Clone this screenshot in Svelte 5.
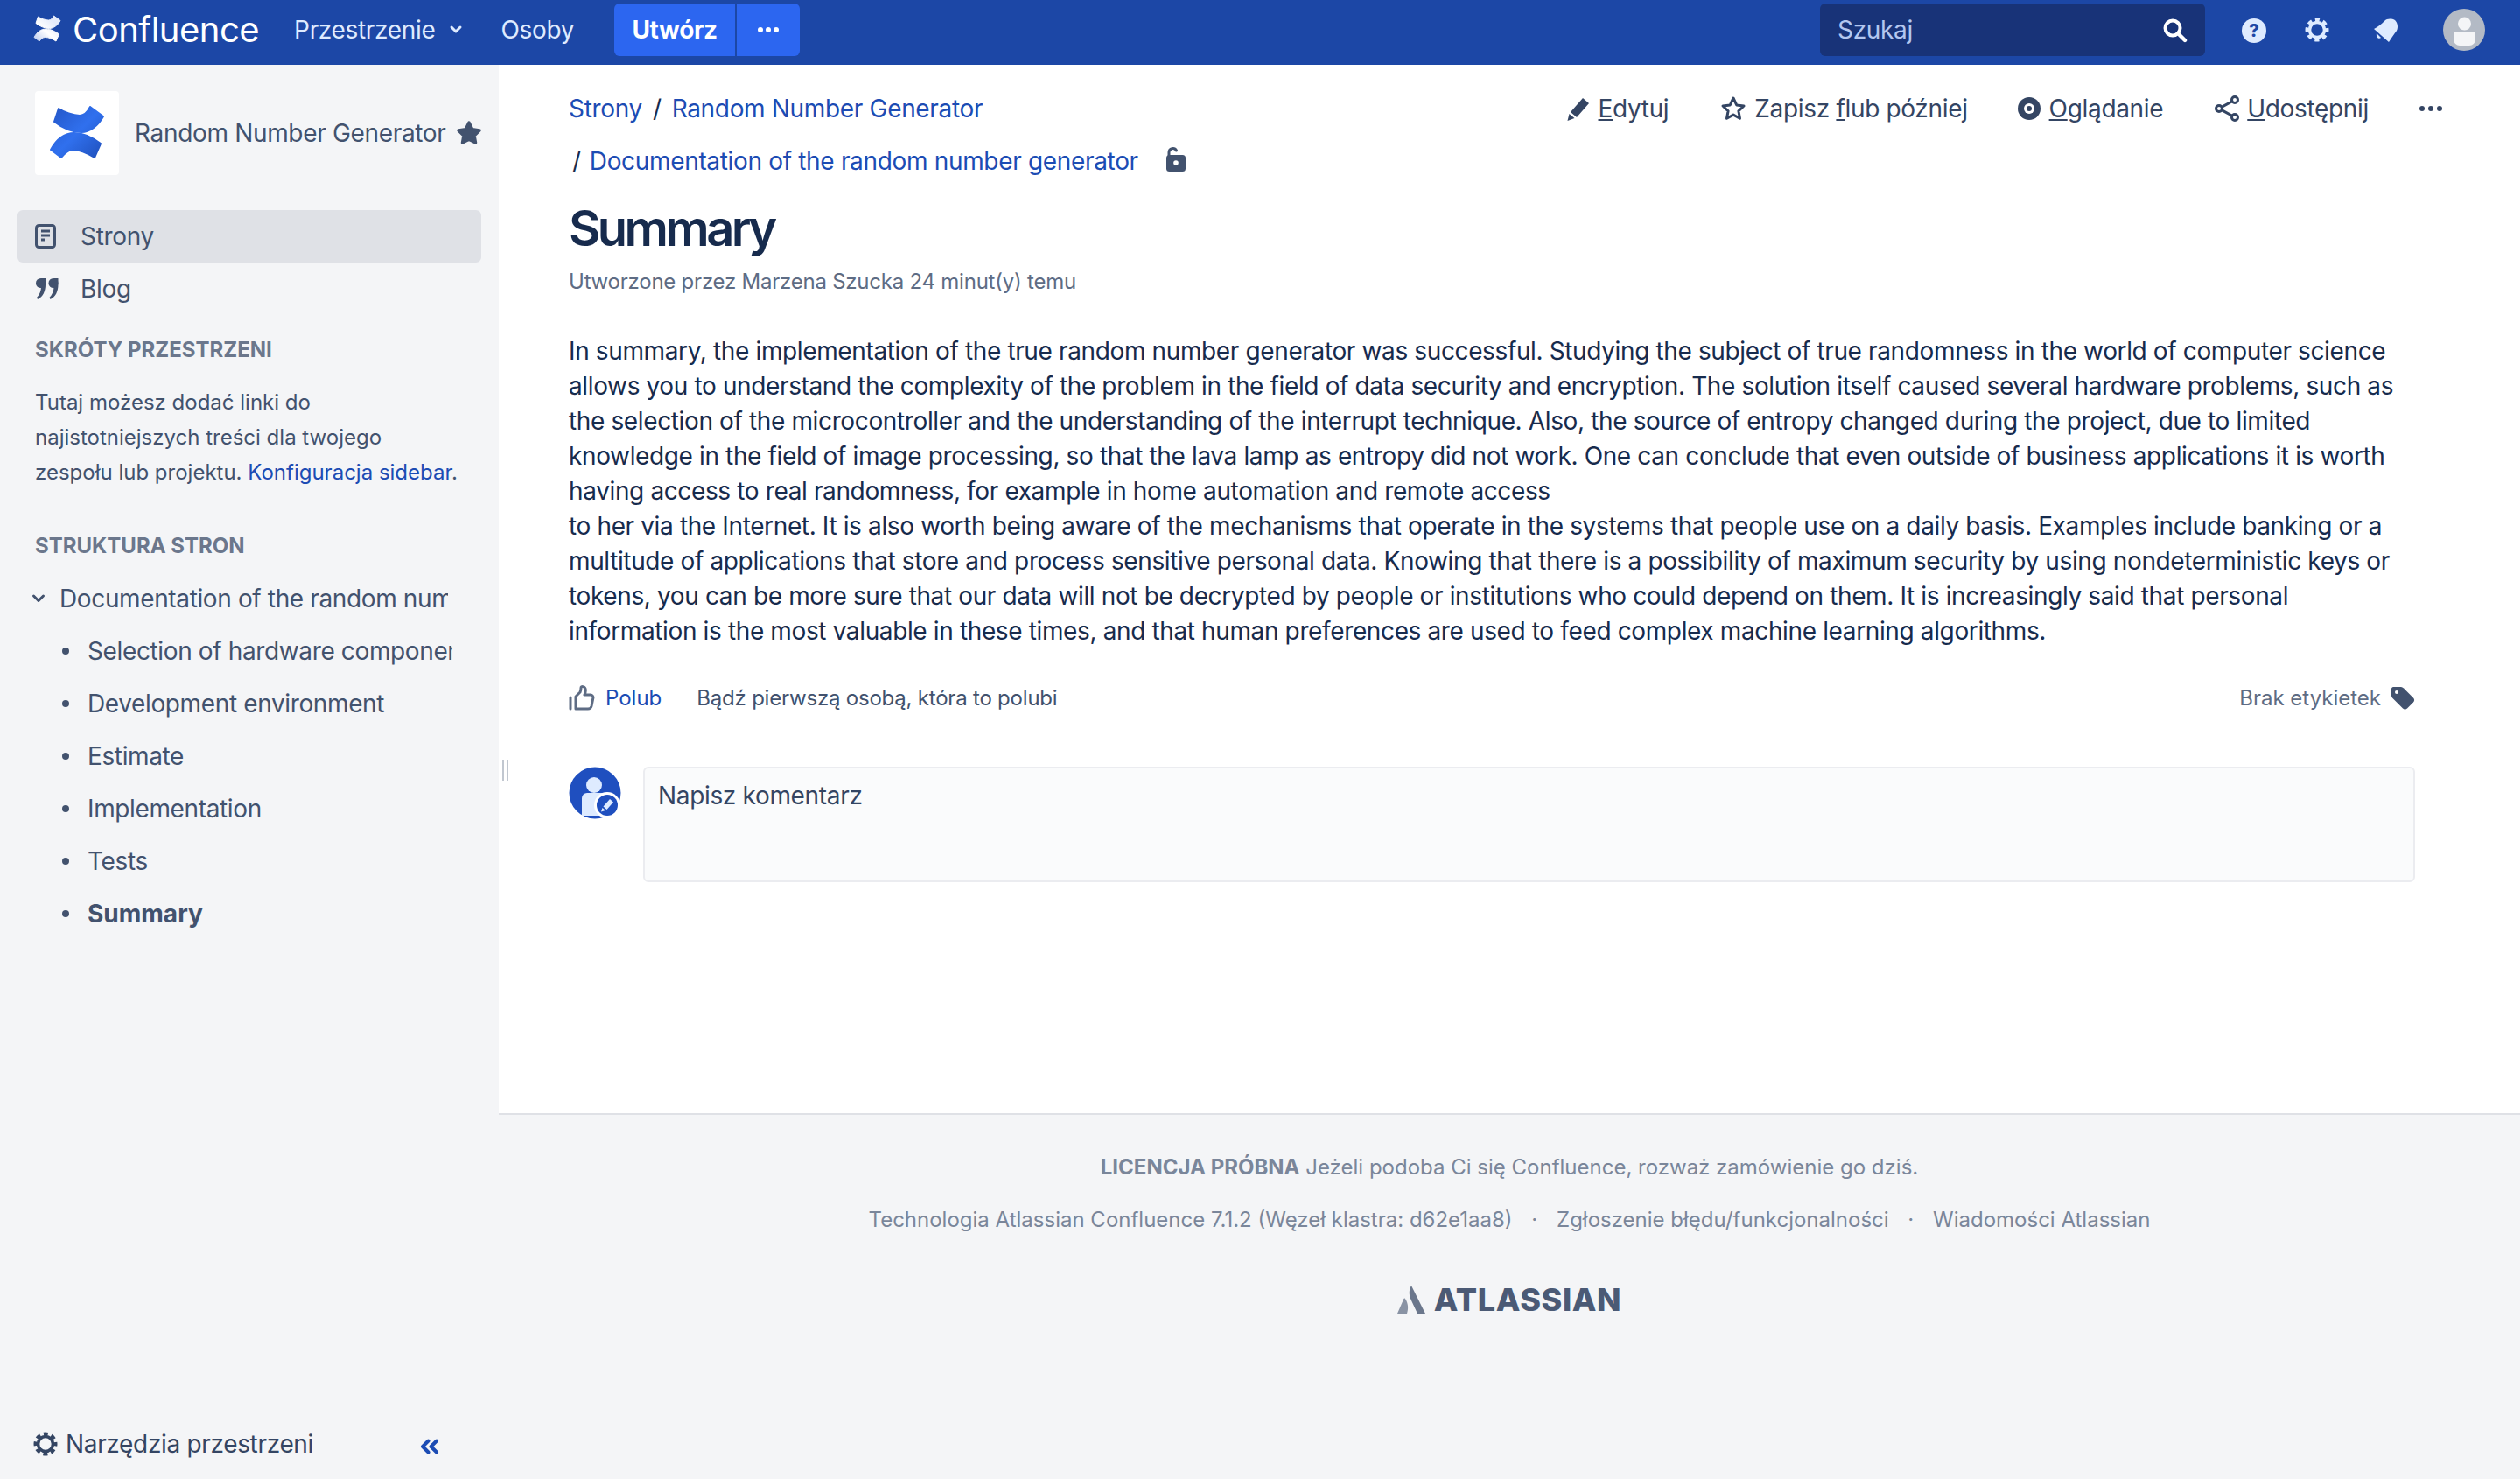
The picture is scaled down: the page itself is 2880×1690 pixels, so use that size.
<script>
  const tree = [
    { label: 'Selection of hardware components', current: false },
    { label: 'Development environment', current: false },
    { label: 'Estimate', current: false },
    { label: 'Implementation', current: false },
    { label: 'Tests', current: false },
    { label: 'Summary', current: true }
  ];
</script>

{#snippet logoShape()}
  <path d="M27 20C33 24 44 28 51 28C56 28 60 24 63 18L78 29C72 40 62 47 53 47C42 47 31 42 22 35Z" />
  <path d="M18 67C24 56 33 48 45 48C56 48 67 54 75 60L68 76C60 71 52 67 43 67C38 67 34 71 30 76Z" />
{/snippet}

{#snippet gear(size)}
  <svg width={size} height={size} viewBox="0 0 28 28" fill="none" stroke="currentColor">
    <circle cx="14" cy="14" r="8.500" stroke-width="3.600" />
    <circle cx="14" cy="14" r="11.500" stroke-width="4" stroke-dasharray="5 4.030" stroke-dashoffset="2.500" />
  </svg>
{/snippet}

<div class="page">
  <header class="topbar">
    <svg class="brand-mark" width="32" height="32" viewBox="16 16 64 64" fill="url(#brandFade)" stroke="url(#brandFade)" stroke-width="2" stroke-linejoin="round">
      <defs>
        <linearGradient id="brandFade" gradientUnits="userSpaceOnUse" x1="20" y1="78" x2="60" y2="30">
          <stop offset="0" stop-color="#b9c9ee" />
          <stop offset="0.55" stop-color="#fff" />
          <stop offset="1" stop-color="#e6ecfa" />
        </linearGradient>
      </defs>
      {@render logoShape()}
    </svg>
    <span class="brand-name">Confluence</span>
    <span class="top-link spaces">Przestrzenie</span>
    <svg class="top-chevron" width="16" height="12" viewBox="0 0 16 12" fill="none" stroke="#deebff" stroke-width="3" stroke-linecap="round" stroke-linejoin="round"><path d="M3 3l5 5 5-5" /></svg>
    <span class="top-link people">Osoby</span>
    <div class="create">
      <span class="create-main">Utwórz</span>
      <span class="create-more">
        <svg width="26" height="8" viewBox="0 0 26 8" fill="#fff"><circle cx="4" cy="4" r="3" /><circle cx="13" cy="4" r="3" /><circle cx="22" cy="4" r="3" /></svg>
      </span>
    </div>
    <div class="top-right">
      <div class="search">
        <span>Szukaj</span>
        <svg width="30" height="30" viewBox="0 0 30 30" fill="none" stroke="#fff" stroke-linecap="round"><circle cx="13" cy="13" r="8.500" stroke-width="4" /><path stroke-width="4.400" d="M20 20l7 7" /></svg>
      </div>
      <svg class="help" width="28" height="28" viewBox="0 0 28 28"><circle cx="14" cy="14" r="14" fill="#deebff" /><text x="14" y="21" text-anchor="middle" class="help-mark">?</text></svg>
      <span class="top-gear">{@render gear(28)}</span>
      <svg class="bell" width="28" height="28" viewBox="0 0 28 28" fill="#deebff"><path d="M0 12C4 10 9 6 12 3C15 0 20 0 24 2C27 5 28 10 26 14C23 18 20 22 17 27Z" /><path d="M3 17l5 5c-2 2-6 0-5-5z" /></svg>
      <svg class="avatar" width="48" height="48" viewBox="0 0 48 48">
        <circle cx="24" cy="24" r="24" fill="#b3bac5" />
        <circle cx="24.500" cy="17" r="7.500" fill="#f4f5f7" />
        <path d="M15 26h19a3 3 0 0 1 3 3v6a7 7 0 0 1-7 7H19a7 7 0 0 1-7-7v-6a3 3 0 0 1 3-3z" fill="#f4f5f7" />
      </svg>
    </div>
  </header>

  <div class="layout">
    <aside class="sidebar">
      <div class="space-head">
        <svg class="space-logo" width="96" height="96" viewBox="0 0 96 96" fill="url(#spaceFade)" stroke="url(#spaceFade)" stroke-width="2" stroke-linejoin="round">
          <defs>
            <linearGradient id="spaceFade" gradientUnits="userSpaceOnUse" x1="20" y1="20" x2="76" y2="76">
              <stop offset="0" stop-color="#2557c8" />
              <stop offset="0.5" stop-color="#3070ee" />
              <stop offset="1" stop-color="#1f50bc" />
            </linearGradient>
          </defs>
          {@render logoShape()}
        </svg>
        <span class="space-name">Random Number Generator</span>
        <svg width="30" height="30" viewBox="0 0 30 30" fill="#42526e"><path d="M15 3l3.800 7.800 8.200 1.200-6 5.900 1.500 8.100-7.500-3.900-7.500 3.900 1.500-8.100-6-5.900 8.200-1.200z" stroke="#42526e" stroke-width="3.500" stroke-linejoin="round" /></svg>
      </div>

      <nav class="space-nav">
        <div class="nav-item active">
          <svg width="24" height="28" viewBox="0 0 24 28" fill="none" stroke="#42526e" stroke-width="3"><rect x="1.500" y="1.500" width="21" height="25" rx="3" /><path d="M7 8h10M7 13h10M7 18h4" /></svg>
          <span>Strony</span>
        </div>
        <div class="nav-item">
          <svg width="28" height="26" viewBox="0 0 28 26" fill="#42526e"><circle cx="6.500" cy="6.500" r="5.500" /><path d="M7 1h5v7c0 8-3 14-9 17l-1-2c3-3 5-8 5-12z" /><circle cx="21" cy="6.500" r="5.500" /><path d="M21.500 1h5v7c0 8-3 14-9 17l-1-2c3-3 5-8 5-12z" /></svg>
          <span>Blog</span>
        </div>
      </nav>

      <h2 class="side-title shortcuts">SKRÓTY PRZESTRZENI</h2>
      <p class="side-note">Tutaj możesz dodać linki do<br />najistotniejszych treści dla twojego<br />zespołu lub projektu. <a href="#top">Konfiguracja sidebar</a>.</p>

      <h2 class="side-title structure">STRUKTURA STRON</h2>
      <ul class="tree">
        <li class="tree-root">
          <svg width="16" height="12" viewBox="0 0 16 12" fill="none" stroke="#42526e" stroke-width="3" stroke-linecap="round" stroke-linejoin="round"><path d="M2.500 3l5.500 5.500 5.500-5.500" /></svg>
          <span>Documentation of the random number generator</span>
        </li>
        {#each tree as page}
          <li class="tree-child" class:current={page.current}>
            <i></i>
            <span>{page.label}</span>
          </li>
        {/each}
      </ul>

      <div class="side-foot">
        {@render gear(28)}
        <span>Narzędzia przestrzeni</span>
        <svg class="collapse" width="22" height="18" viewBox="0 0 22 18" fill="none" stroke="#1c4cb4" stroke-width="4" stroke-linecap="round" stroke-linejoin="round"><path d="M9.500 2.500L3 9l6.500 6.500M19 2.500L12.500 9l6.500 6.500" /></svg>
      </div>
    </aside>

    <div class="grip"><i></i><i></i></div>

    <main class="main">
      <section class="content">
        <div class="page-top">
          <div class="crumbs">
            <div class="crumb-line">
              <a href="#top">Strony</a><span class="sep">/</span><a href="#top">Random Number Generator</a>
            </div>
            <div class="crumb-line second">
              <span class="sep first">/</span><a href="#top">Documentation of the random number generator</a>
              <svg class="lock" width="22" height="28" viewBox="0 0 22 28" fill="#42526e"><rect x="0" y="9" width="22" height="19" rx="3.500" /><path d="M3 10V6a4.500 4.500 0 0 1 8.500-2" fill="none" stroke="#42526e" stroke-width="3" stroke-linecap="round" /><circle cx="11" cy="18" r="2.800" fill="#fff" /></svg>
            </div>
          </div>
          <div class="actions">
            <span class="action edit">
              <svg width="28" height="28" viewBox="0 0 28 28" fill="#344563"><path d="M19 2l7 6-14 16-7-6z" /><path d="M3.500 20l6 5-8 3z" /></svg>
              <span><u>E</u>dytuj</span>
            </span>
            <span class="action later">
              <svg width="30" height="30" viewBox="0 0 30 30" fill="none" stroke="#344563" stroke-width="3" stroke-linejoin="round"><path d="M15 3l3.700 7.900 8.300 1.100-6.100 5.800 1.600 8.500-7.500-4.200-7.500 4.200 1.600-8.500-6.100-5.800 8.300-1.100z" /></svg>
              <span>Zapisz <u>f</u>lub później</span>
            </span>
            <span class="action watch">
              <svg width="28" height="28" viewBox="0 0 28 28"><circle cx="14" cy="14" r="13" fill="#344563" /><circle cx="14" cy="14" r="6" fill="#fff" /><circle cx="14" cy="14" r="3" fill="#344563" /></svg>
              <span><u>O</u>glądanie</span>
            </span>
            <span class="action share">
              <svg width="28" height="30" viewBox="0 0 28 30" fill="none" stroke="#344563" stroke-width="3"><circle cx="5" cy="15" r="3.500" /><circle cx="23" cy="5" r="3.500" /><circle cx="23" cy="25" r="3.500" /><path d="M8 13.300L20 6.700M8 16.700L20 23.300" /></svg>
              <span><u>U</u>dostępnij</span>
            </span>
            <svg class="more" width="28" height="8" viewBox="0 0 28 8" fill="#344563"><circle cx="4" cy="4" r="3" /><circle cx="14" cy="4" r="3" /><circle cx="24" cy="4" r="3" /></svg>
          </div>
        </div>

        <h1>Summary</h1>
        <p class="byline">Utworzone przez Marzena Szucka 24 minut(y) temu</p>

        <div class="body-text">
          In summary, the implementation of the true random number generator was successful. Studying the subject of true randomness in the world of computer science allows you to understand the complexity of the problem in the field of data security and encryption. The solution itself caused several hardware problems, such as the selection of the microcontroller and the understanding of the interrupt technique. Also, the source of entropy changed during the project, due to limited knowledge in the field of image processing, so that the lava lamp as entropy did not work. One can conclude that even outside of business applications it is worth having access to real randomness, for example in home automation and remote access<br />
          to her via the Internet. It is also worth being aware of the mechanisms that operate in the systems that people use on a daily basis. Examples include banking or a multitude of applications that store and process sensitive personal data. Knowing that there is a possibility of maximum security by using nondeterministic keys or tokens, you can be more sure that our data will not be decrypted by people or institutions who could depend on them. It is increasingly said that personal information is the most valuable in these times, and that human preferences are used to feed complex machine learning algorithms.
        </div>

        <div class="like-row">
          <svg class="thumb" width="30" height="30" viewBox="0 0 30 30" fill="none" stroke="#5e6c84" stroke-width="3" stroke-linejoin="round" stroke-linecap="round"><path d="M2 14v13" /><path d="M8 27V13l5-5c1-2 1-4 1-5 0-2 4-2 5 1 .6 2 0 5-1 7h7c2 0 3 2 3 3l-2 10c-.5 2-2 3-4 3z" /></svg>
          <a href="#top">Polub</a>
          <span class="like-hint">Bądź pierwszą osobą, która to polubi</span>
          <span class="no-labels">Brak etykietek</span>
          <svg width="28" height="28" viewBox="0 0 28 28" fill="#42526e"><path d="M3 1h9c1 0 2 .5 3 1.500l11 11c1.500 1.500 1.500 3.500 0 5l-7 7c-1.500 1.500-3.500 1.500-5 0L3 14.500C2 13.500 1 12.500 1 11V3c0-1 1-2 2-2z" /><circle cx="7" cy="7" r="2" fill="#fff" /></svg>
        </div>

        <div class="comment">
          <svg class="comment-avatar" width="60" height="60" viewBox="0 0 60 60">
            <circle cx="30" cy="30" r="29.500" fill="#1f4fbf" />
            <circle cx="29" cy="21" r="9" fill="#deebff" />
            <path d="M15 36a6 6 0 0 1 6-6h18a6 6 0 0 1 6 6v20H15z" fill="#deebff" />
            <circle cx="44" cy="44" r="15" fill="#fff" />
            <circle cx="44" cy="44" r="12" fill="#1f4fbf" />
            <path d="M47 37l4 3.500-7.500 8.500-4-3.500zM38.500 47l3.500 3-5 1.500z" fill="#deebff" />
          </svg>
          <div class="comment-box">Napisz komentarz</div>
        </div>
      </section>

      <footer class="footer">
        <p class="license"><b>LICENCJA PRÓBNA</b> Jeżeli podoba Ci się Confluence, rozważ zamówienie go dziś.</p>
        <p class="foot-links">
          <span>Technologia Atlassian Confluence 7.1.2 (Węzeł klastra: d62e1aa8)</span>
          <span class="dot">·</span>
          <span>Zgłoszenie błędu/funkcjonalności</span>
          <span class="dot">·</span>
          <span>Wiadomości Atlassian</span>
        </p>
        <div class="atlassian">
          <svg width="32" height="32" viewBox="0 0 32 32"><path d="M16 0c-3 5-3 11 0 17l7 15h9z" fill="#6b778c" /><path d="M9 15c-.5-.7-1.300-.6-1.700.2L0 32h11c1.500-5 2-11-2-17z" fill="#8993a4" /></svg>
          <span>ATLASSIAN</span>
        </div>
      </footer>
    </main>
  </div>
</div>

<style>
  :global(body) {
    margin: 0;
    background: #fff;
    font-family: Inter, "Liberation Sans", sans-serif;
  }

  .page {
    width: 2880px;
    height: 1690px;
    display: flex;
    flex-direction: column;
    overflow: hidden;
    color: #172b4d;
    font-size: 28px;
    line-height: 40px;
    letter-spacing: -0.33px;
  }

  a {
    color: #1c4cb4;
    text-decoration: none;
  }

  /* top bar */
  .topbar {
    height: 74px;
    flex: none;
    background: #1c47a6;
    display: flex;
    align-items: flex-start;
    color: #deebff;
  }

  .brand-mark {
    margin: 17px 0 0 38px;
  }

  .brand-name {
    margin: 12px 0 0 13px;
    color: #fff;
    font-size: 40px;
    line-height: 44px;
    letter-spacing: -0.5px;
  }

  .top-link {
    margin-top: 14px;
  }

  .spaces {
    margin-left: 40px;
  }

  .top-chevron {
    margin: 28px 0 0 16px;
  }

  .people {
    margin-left: 43px;
  }

  .create {
    margin: 4px 0 0 46px;
    height: 60px;
    width: 212px;
    display: flex;
    border-radius: 6px;
    overflow: hidden;
    background: #2c66f0;
    color: #fff;
    font-weight: 700;
  }

  .create-main {
    width: 138px;
    text-align: center;
    line-height: 60px;
    border-right: 2px solid #1c47a6;
  }

  .create-more {
    flex: 1;
    display: flex;
    align-items: center;
    justify-content: center;
  }

  .top-right {
    margin-left: auto;
    display: flex;
    align-items: flex-start;
    padding-right: 40px;
  }

  .search {
    width: 440px;
    height: 60px;
    margin-top: 4px;
    box-sizing: border-box;
    padding: 0 20px;
    display: flex;
    align-items: center;
    justify-content: space-between;
    background: #183378;
    border-radius: 6px;
    color: #b3c7f0;
  }

  .help {
    margin: 21px 0 0 42px;
  }

  .help-mark {
    font-size: 20px;
    font-weight: 800;
    fill: #1c47a6;
  }

  .top-gear {
    margin: 20px 0 0 44px;
    color: #deebff;
    line-height: 0;
  }

  .bell {
    margin: 21px 0 0 51px;
  }

  .avatar {
    margin: 10px 0 0 51px;
  }

  /* sidebar */
  .layout {
    flex: 1;
    min-height: 0;
    display: flex;
    position: relative;
  }

  .sidebar {
    width: 570px;
    flex: none;
    box-sizing: border-box;
    background: #f4f5f7;
    padding-top: 30px;
    display: flex;
    flex-direction: column;
    color: #42526e;
  }

  .space-head {
    display: flex;
    align-items: center;
    padding-left: 40px;
  }

  .space-logo {
    background: #fff;
    border-radius: 4px;
  }

  .space-name {
    margin: 0 11px 0 18px;
    white-space: nowrap;
  }

  .space-nav {
    margin: 40px 20px 0;
  }

  .nav-item {
    height: 60px;
    display: flex;
    align-items: center;
    padding-left: 20px;
    border-radius: 6px;
  }

  .nav-item span {
    margin-left: 28px;
  }

  .nav-item:nth-child(2) span {
    margin-left: 24px;
  }

  .active {
    background: #dfe1e6;
  }

  .side-title {
    margin: 0 0 0 40px;
    font-size: 24px;
    line-height: 32px;
    font-weight: 700;
    letter-spacing: 0;
    color: #6b778c;
  }

  .shortcuts {
    margin-top: 24px;
  }

  .side-note {
    margin: 24px 0 0 40px;
    font-size: 24px;
    line-height: 40px;
    letter-spacing: 0;
  }

  .structure {
    margin-top: 48px;
  }

  .tree {
    list-style: none;
    margin: 14px 0 0;
    padding: 0;
    letter-spacing: -0.37px;
  }

  .tree-root,
  .tree-child {
    height: 60px;
    display: flex;
    align-items: center;
    white-space: nowrap;
  }

  .tree-root {
    padding-left: 36px;
  }

  .tree-root span {
    margin-left: 16px;
    width: 444px;
    overflow: hidden;
  }

  .tree-child {
    padding-left: 71px;
  }

  .tree-child i {
    width: 8px;
    height: 8px;
    border-radius: 50%;
    background: #42526e;
  }

  .tree-child span {
    margin-left: 21px;
    width: 417px;
    overflow: hidden;
  }

  .current {
    font-weight: 700;
    letter-spacing: 0;
  }

  .side-foot {
    margin-top: auto;
    height: 40px;
    margin-bottom: 20px;
    padding-left: 38px;
    display: flex;
    align-items: center;
    color: #344563;
  }

  .side-foot span {
    margin-left: 9px;
  }

  .collapse {
    margin: 6px 0 0 122px;
  }

  .grip {
    position: absolute;
    left: 574px;
    top: 794px;
    height: 24px;
    display: flex;
    gap: 3px;
  }

  .grip i {
    width: 2px;
    background: #c1c7d0;
  }

  /* page */
  .main {
    flex: 1;
    min-width: 0;
    display: flex;
    flex-direction: column;
  }

  .content {
    height: 1198px;
    flex: none;
    box-sizing: border-box;
    padding: 30px 120px 0 80px;
  }

  .page-top {
    display: flex;
    justify-content: space-between;
  }

  .crumb-line {
    height: 40px;
    display: flex;
    align-items: center;
    white-space: nowrap;
  }

  .crumb-line.second {
    margin-top: 20px;
  }

  .sep {
    margin: 0 12px;
    color: #172b4d;
  }

  .sep.first {
    margin: 0 10px 0 4px;
  }

  .lock {
    margin: -4px 0 0 32px;
  }

  .actions {
    height: 40px;
    display: flex;
    align-items: center;
    margin-right: -32px;
    color: #344563;
    white-space: nowrap;
  }

  .action {
    display: flex;
    align-items: center;
    gap: 9px;
  }

  .later {
    margin-left: 59px;
  }

  .watch {
    margin-left: 56px;
  }

  .share {
    margin-left: 59px;
  }

  .more {
    margin-left: 57px;
  }

  h1 {
    margin: 21px 0 0;
    font-size: 56px;
    line-height: 72px;
    font-weight: 600;
    letter-spacing: -3.600px;
    color: #172b4d;
  }

  .byline {
    margin: 5px 0 0;
    font-size: 24px;
    line-height: 40px;
    letter-spacing: -0.23px;
    color: #5e6c84;
  }

  .body-text {
    margin-top: 39px;
    color: #172b4d;
    letter-spacing: -0.37px;
  }

  .like-row {
    margin-top: 37px;
    height: 40px;
    display: flex;
    align-items: center;
    font-size: 24px;
    letter-spacing: 0;
    color: #42526e;
  }

  .like-row a {
    margin-left: 12px;
  }

  .like-hint {
    margin-left: 40px;
    letter-spacing: -0.21px;
  }

  .no-labels {
    margin-left: auto;
    margin-right: 11px;
    color: #5e6c84;
  }

  .comment {
    margin-top: 58px;
    display: flex;
    align-items: flex-start;
  }

  .comment-box {
    margin-left: 25px;
    flex: 1;
    height: 132px;
    box-sizing: border-box;
    padding: 11px 15px;
    background: #fafbfc;
    border: 2px solid #ebecf0;
    border-radius: 6px;
    color: #344563;
  }

  .footer {
    flex: 1;
    border-top: 2px solid #dfe1e6;
    background: #f4f5f7;
    text-align: center;
    font-size: 24px;
    letter-spacing: 0;
    color: #7a869a;
  }

  .footer p {
    margin: 0;
  }

  .license {
    padding-top: 40px;
  }

  .foot-links {
    margin-top: 20px !important;
  }

  .dot {
    margin: 0 15px;
  }

  .atlassian {
    margin-top: 51px;
    display: flex;
    justify-content: center;
    align-items: center;
    gap: 10px;
    color: #4b5a75;
    font-size: 36px;
    font-weight: 800;
    letter-spacing: 0.6px;
  }
</style>
